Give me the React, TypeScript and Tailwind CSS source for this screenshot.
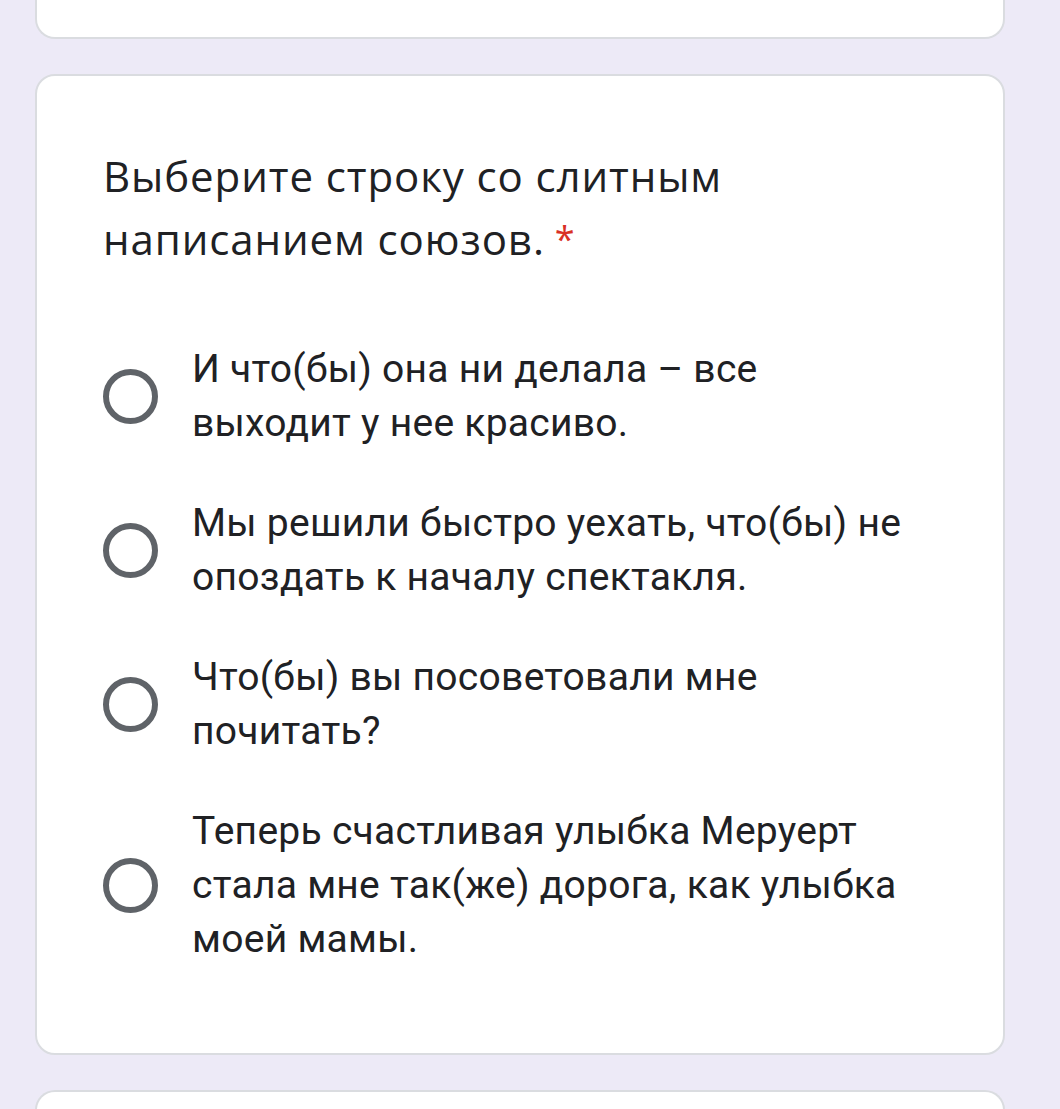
import React from "react";

const options = [
  ["И что(бы) она ни делала – все", "выходит у нее красиво."],
  ["Мы решили быстро уехать, что(бы) не", "опоздать к началу спектакля."],
  ["Что(бы) вы посоветовали мне", "почитать?"],
  ["Теперь счастливая улыбка Меруерт", "стала мне так(же) дорога, как улыбка", "моей мамы."],
];

function Radio() {
  return (
    <div className="w-[55px] h-[55px] shrink-0 rounded-full border-[6px] border-[#5f6368]" />
  );
}

export default function App() {
  return (
    <div className="w-[1060px] h-[1109px] overflow-hidden bg-[#edeaf7] pl-[35px] pr-[55px] flex flex-col gap-[35px]">
      <div className="h-[39px] shrink-0 bg-white rounded-b-[20px] border-2 border-t-0 border-[#dadce0]" />
      <div className="shrink-0 h-[981px] bg-white rounded-[20px] border-2 border-[#dadce0] pl-[66px] pr-[30px] pt-[68px]">
        <div
          className="text-[42px] leading-[63px] tracking-[0.9px] text-[#202124]"
          style={{ fontFamily: '"Open Sans", "Noto Sans", sans-serif' }}
        >
          <div>Выберите строку со слитным</div>
          <div>
            написанием союзов.
            <span className="ml-[10px] text-[36px] align-[3px] text-[#d93025]">*</span>
          </div>
        </div>
        <div
          className="mt-[72px] flex flex-col gap-[46px] text-[39px] leading-[54px] tracking-[0.27px] text-[#202124]"
          style={{ fontFamily: 'Roboto, "Noto Sans", sans-serif' }}
        >
          {options.map((lines, i) => (
            <div key={i} className="flex items-center gap-[34px]">
              <Radio />
              <div>
                {lines.map((l, j) => (
                  <div key={j}>{l}</div>
                ))}
              </div>
            </div>
          ))}
        </div>
      </div>
      <div className="h-[100px] shrink-0 bg-white rounded-t-[20px] border-2 border-b-0 border-[#dadce0]" />
    </div>
  );
}
